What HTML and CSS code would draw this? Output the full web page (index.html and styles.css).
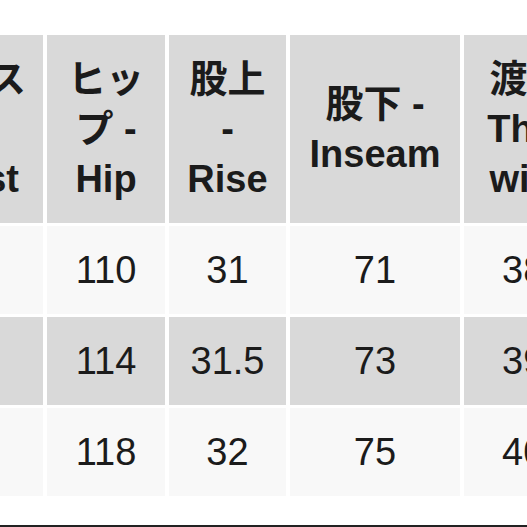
FILE: index.html
```html
<!DOCTYPE html>
<html lang="ja">
<head>
<meta charset="utf-8">
<title>サイズ表</title>
<link rel="stylesheet" href="styles.css">
</head>
<body>
<div class="viewport">
  <table class="size-table">
    <colgroup>
      <col class="c-waist">
      <col class="c-hip">
      <col class="c-rise">
      <col class="c-inseam">
      <col class="c-thigh">
    </colgroup>
    <thead>
      <tr>
        <th>ウエスト - Waist</th>
        <th>ヒップ - Hip</th>
        <th>股上 - Rise</th>
        <th>股下 - Inseam</th>
        <th>渡り - Thigh width</th>
      </tr>
    </thead>
    <tbody>
      <tr class="odd">
        <td>76</td><td>110</td><td>31</td><td>71</td><td>38.5</td>
      </tr>
      <tr class="even">
        <td>80</td><td>114</td><td>31.5</td><td>73</td><td>39.5</td>
      </tr>
      <tr class="odd">
        <td>84</td><td>118</td><td>32</td><td>75</td><td>40.5</td>
      </tr>
    </tbody>
  </table>
  <div class="divider"></div>
</div>
</body>
</html>
```
FILE: styles.css
```css
html, body {
  margin: 0;
  padding: 0;
  background: #ffffff;
}

.viewport {
  width: 527px;
  height: 527px;
  overflow: hidden;
  padding-top: 32px;
  box-sizing: border-box;
}

.size-table {
  margin-left: -109px;
  border-collapse: separate;
  border-spacing: 4px 3px;
  table-layout: fixed;
  width: 647px;
  color: #1b1b1b;
}

.c-waist { width: 148px; }
.c-hip { width: 118px; }
.c-rise { width: 117px; }
.c-inseam { width: 170px; }
.c-thigh { width: 150px; }

.size-table th {
  background: #d9d9d9;
  font-family: "Liberation Sans", "Noto Sans CJK JP", sans-serif;
  font-weight: 700;
  font-size: 38px;
  line-height: 50px;
  height: 188px;
  padding: 0 15px;
  box-sizing: border-box;
  text-align: center;
  vertical-align: middle;
  line-break: normal;
}

.size-table td {
  font-family: "Liberation Sans", "Noto Sans CJK JP", sans-serif;
  font-weight: 400;
  font-size: 38px;
  line-height: 40px;
  height: 88px;
  padding: 0 10px;
  box-sizing: border-box;
  text-align: center;
  vertical-align: middle;
}

.odd td { background: #f8f8f8; }
.even td { background: #d9d9d9; }

.divider {
  margin-top: 26px;
  border-top: 2px solid #222222;
}
```
